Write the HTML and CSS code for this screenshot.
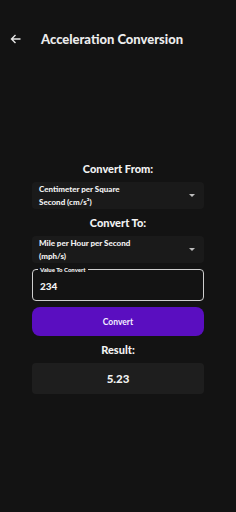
FILE: index.html
```
<!DOCTYPE html>
<html lang="en">
<head>
	<meta charset="UTF-8">
	<title>Acceleration Conversion</title>
	<link rel="stylesheet" href="styles.css">
</head>
<body>
	<header class="app-bar">
		<svg class="back" width="11" height="10" viewBox="0 0 11 10">
			<path d="M10.5 5H1.5M5.5 1L1.5 5l4 4" fill="none" stroke="#e6e6e6" stroke-width="1.4"/>
		</svg>
		<h1 class="title">Acceleration Conversion</h1>
	</header>

	<main class="form">
		<div class="label">Convert From:</div>
		<div class="select">
			<span class="select-text">Centimeter per Square<br>Second (cm/s²)</span>
			<span class="caret"></span>
		</div>

		<div class="label">Convert To:</div>
		<div class="select">
			<span class="select-text">Mile per Hour per Second<br>(mph/s)</span>
			<span class="caret"></span>
		</div>

		<div class="field">
			<span class="field-label">Value To Convert</span>
			<div class="field-value">234</div>
		</div>

		<button class="btn">Convert</button>

		<div class="label">Result:</div>
		<div class="result">5.23</div>
	</main>
</body>
</html>
```
FILE: styles.css
```
/*--reset--*/
html, body {
	margin: 0;
	padding: 0;
}
body {
	width: 236px;
	height: 512px;
	background: #131313;
	color: #f2f2f2;
	font-family: Lato, "Noto Sans", sans-serif;
	font-weight: 700;
}

/**
 * app bar
 */
.app-bar {
	display: flex;
	align-items: center;
	height: 28px;
	margin-top: 25px;
	padding-left: 10px;
}
.back {
	display: block;
}
.title {
	margin: 0 0 0 20px;
	font-size: 13px;
	font-weight: 900;
	color: #ececec;
}

/**
 * form
 */
.form {
	display: flex;
	flex-direction: column;
	margin: 109px 32px 0;
}
.label {
	text-align: center;
	font-size: 11px;
	font-weight: 900;
	line-height: 14px;
	margin: 7px 0 6px;
}
.form .label:first-child {
	margin-top: 0;
}
.select {
	display: flex;
	align-items: center;
	height: 27px;
	padding: 0 9px 0 7px;
	background: #1a1a1a;
	border-radius: 4px;
}
.select-text {
	flex: 1;
	font-size: 8px;
	font-weight: 900;
	line-height: 13px;
}
.caret {
	width: 0;
	height: 0;
	border-left: 3.5px solid transparent;
	border-right: 3.5px solid transparent;
	border-top: 3.5px solid #bdbdbd;
}
.field {
	position: relative;
	margin-top: 6px;
	height: 32px;
	padding: 0 7px;
	border: 1px solid #cfcfcf;
	border-radius: 4px;
	box-sizing: border-box;
	display: flex;
	align-items: center;
}
.field-label {
	position: absolute;
	top: -4px;
	left: 5px;
	padding: 0 2px;
	background: #131313;
	font-size: 6px;
	font-weight: 900;
	line-height: 7px;
}
.field-value {
	margin-top: 2px;
	font-size: 10px;
	font-weight: 900;
}
.btn {
	margin-top: 6px;
	height: 29px;
	border: 0;
	border-radius: 8px;
	background: #5a0ec0;
	color: #f4f0ff;
	font-family: Lato, "Noto Sans", sans-serif;
	font-size: 8.5px;
	font-weight: 700;
}
.result {
	height: 31px;
	line-height: 31px;
	background: #1e1e1e;
	border-radius: 4px;
	text-align: center;
	font-size: 11.5px;
	font-weight: 900;
}
```
